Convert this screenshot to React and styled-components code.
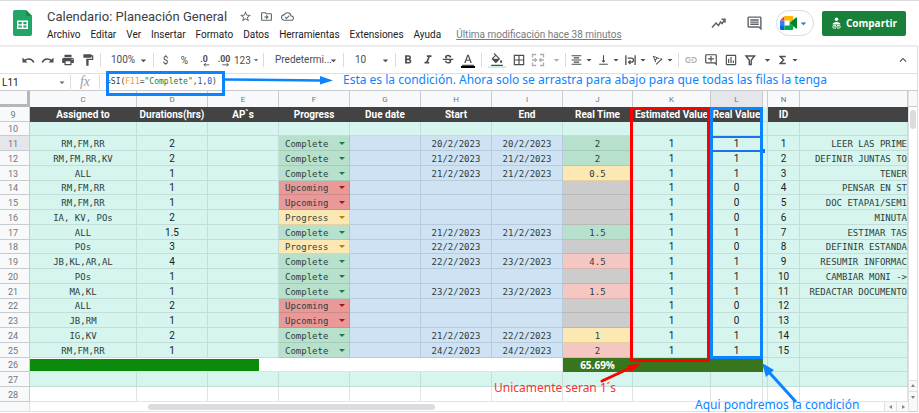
import React from 'react';
import styled, { createGlobalStyle, css } from 'styled-components';
import {
  MdPrint, MdFormatPaint, MdFormatBold, MdFormatItalic, MdStrikethroughS,
  MdFormatColorText, MdFormatColorFill, MdBorderAll, MdFormatAlignCenter, MdVerticalAlignBottom,
  MdLink, MdOutlineAddComment, MdOutlineInsertChart, MdFunctions,
  MdKeyboardArrowUp, MdArrowDropDown, MdStarBorder, MdOutlineDriveFileMove, MdOutlineCloudDone,
  MdOutlineInsertComment, MdTextRotationAngleup,
} from 'react-icons/md';

const BLUE = '#0a84ff';
const RED = '#ff0000';
const MINT = '#d5f5ee';

const GlobalStyle = createGlobalStyle`
  * { box-sizing: border-box; }
  body { margin: 0; background: #fff; color: #3c4043; font-family: Roboto, "Liberation Sans", sans-serif; font-size: 10px; }
  button, select, input { font: inherit; color: inherit; background: none; border: 0; border-radius: 0; padding: 0; margin: 0; outline: 0; }
`;

const Page = styled.div`
  border-top: 1px solid #dadada;
  padding-right: 1px;
`;

/* ---------- Document header ---------- */

const DocHeader = styled.header`
  display: flex;
  align-items: flex-start;
  height: 44px;
  padding: 9px 12px 0 13px;
`;
const DocInfo = styled.div`
  flex: 1;
  margin-left: 15px;
  margin-top: -2px;
`;
const TitleRow = styled.div`
  display: flex;
  align-items: center;
  height: 17px;
`;
const DocTitle = styled.h1`
  margin: 0 8px 0 0;
  font: 400 13px/17px Roboto, sans-serif;
  color: #3c4043;
`;
const TitleButton = styled.button`
  display: flex;
  width: 21px;
  justify-content: center;
  color: #5f6368;
  svg { width: 13px; height: 13px; }
`;
const MenuBar = styled.nav`
  display: flex;
  gap: 10px;
  height: 20px;
  align-items: center;
  color: #202124;
`;
const MenuButton = styled.button`
  line-height: 14px;
`;
const HistoryLink = styled.a`
  margin-left: 5px;
  color: #777b80;
  line-height: 14px;
`;
const Actions = styled.div`
  display: flex;
  align-items: center;
  height: 26px;
`;
const HeaderButton = styled.button`
  display: flex;
  width: 36px;
  justify-content: center;
  color: #5f6368;
`;
const MeetButton = styled.button`
  display: flex;
  align-items: center;
  justify-content: center;
  width: 38px;
  height: 26px;
  margin: 0 8px 0 4px;
  border: 1px solid #dadce0;
  border-radius: 13px;
  color: #1a73e8;
  svg { flex: none; }
`;
const ShareButton = styled.button`
  display: flex;
  align-items: center;
  justify-content: center;
  gap: 4px;
  width: 84px;
  height: 25px;
  border-radius: 2px;
  background: #188038;
  color: #fff;
  font: 700 10px/14px "Open Sans", sans-serif;
`;

/* ---------- Toolbar ---------- */

const Toolbar = styled.div`
  display: flex;
  align-items: center;
  height: 28px;
  padding: 0 4px 0 18px;
  border-top: 2px solid #ececec;
  border-right: 1px solid #dadce0;
  color: #4a4d51;
`;
const Divider = styled.span`
  width: 1px;
  height: 14px;
  margin: 0 ${p => (p.$wide ? 3 : 2)}px;
  background: #dadce0;
`;
const Tool = styled.button`
  position: relative;
  display: flex;
  align-items: center;
  justify-content: center;
  width: ${p => p.$w || 20}px;
  height: 20px;
  opacity: ${p => (p.$faded ? 0.45 : 1)};
  svg { width: 14px; height: 14px; }
`;
const SplitTool = styled(Tool)`
  justify-content: space-between;
  padding: 0 0 0 2px;
  svg:last-child { width: 13px; }
`;
const Swatch = styled.span`
  position: absolute;
  left: 3px;
  right: 3px;
  bottom: 2px;
  height: 2px;
  background: ${p => p.$color};
`;
const PickerLabel = styled.label`
  position: relative;
  display: flex;
  align-items: center;
  width: ${p => p.$w}px;
  svg { position: absolute; right: 1px; pointer-events: none; }
`;
const Picker = styled.select`
  appearance: none;
  width: 100%;
  height: 20px;
  padding-left: ${p => p.$pad || 8}px;
  line-height: 14px;
`;
const Spacer = styled.span`
  flex: 1;
`;

/* ---------- Formula bar ---------- */

const FormulaBar = styled.div`
  position: relative;
  display: flex;
  align-items: center;
  height: 17px;
  border-top: 1px solid #e0e0e0;
  border-right: 1px solid #dadce0;
`;
const NameBox = styled.input`
  width: 56px;
  padding-left: 2px;
  color: #202124;
`;
const NameMenu = styled.button`
  display: flex;
  width: 12px;
  color: #5f6368;
`;
const FxMark = styled.span`
  width: 24px;
  text-align: center;
  color: #9aa0a6;
  font: italic 14px/14px "Liberation Serif", serif;
`;
const Formula = styled.div`
  flex: 1;
  padding-left: 4px;
  color: #3c4043;
  font: 8px/14px "DejaVu Sans Mono", monospace;
  em { color: #f7981d; font-style: normal; }
  b { color: #188018; font-weight: 400; }
  i { color: #1155cc; font-style: normal; }
`;
const FormulaFrame = styled.div`
  position: absolute;
  z-index: 2;
  left: 106px;
  top: -3px;
  width: 119px;
  height: 25px;
  border: 3px solid ${BLUE};
`;
const FormulaNote = styled.div`
  position: absolute;
  left: 225px;
  top: -2px;
  display: flex;
  align-items: center;
  gap: 8px;
`;
const Note = styled.p`
  margin: 0;
  color: ${p => p.$color};
  font: 12px/16px "Noto Sans", sans-serif;
  white-space: nowrap;
`;

/* ---------- Sheet ---------- */

const SheetArea = styled.main`
  position: relative;
  display: flex;
  border-top: 1px solid #c9cbce;
`;
const GridPane = styled.div`
  flex: 1;
  min-width: 0;
`;
const Grid = styled.table`
  width: 100%;
  table-layout: fixed;
  border-collapse: separate;
  border-spacing: 0;
  th, td {
    height: 15px;
    padding: 1px 0 0;
    overflow: hidden;
    text-align: center;
    white-space: nowrap;
    line-height: 12px;
    border-right: 1px solid #c3ddd8;
    border-bottom: 1px solid #c3ddd8;
  }
  tbody tr:nth-child(4n + 2) > * { height: 14px; }
`;
const Corner = styled.td`
  && {
    height: 16px;
    background: #f8f9fa;
    border-right: 3px solid #b7b7b7;
    border-bottom: 3px solid #b7b7b7;
  }
`;
const Letter = styled.th`
  && {
    height: 16px;
    background: ${p => (p.$active ? '#e4e6e9' : '#f8f9fa')};
    color: #70757a;
    font-size: 8px;
    font-weight: 400;
    border-color: #c9cbce;
    border-bottom: 0;
  }
`;
const RowNumber = styled.th`
  && {
    background: ${p => (p.$active ? '#e4e6e9' : '#f8f9fa')};
    color: #70757a;
    font-size: 9px;
    font-weight: 400;
    padding-right: 3px;
    border-color: #c9cbce;
  }
`;
const FieldName = styled.th`
  && {
    background: #434343;
    color: #fff;
    font: 700 10px/12px Roboto, sans-serif;
    border-color: #434343;
  }
`;
const tones = {
  mint: css`background: ${MINT};`,
  blue: css`background: #cfe2f3; && { border-color: #b8cbdd; }`,
  green: css`background: #b7e1cd; && { border-color: #a4cdb9; }`,
  red: css`background: #ea9999; && { border-color: #d28989; }`,
  yellow: css`background: #fce8b2; && { border-color: #e6d19c; }`,
  pink: css`background: #f4c7c3; && { border-color: #dcb3af; }`,
  gray: css`background: #cccccc; && { border-color: #b8b8b8; }`,
  white: css`background: #fff; && { border-color: #e2e3e3; }`,
  forest: css`background: #38761d; color: #fff; && { border-color: #38761d; }`,
};
const Cell = styled.td`
  ${p => tones[p.$tone || 'mint']}
  color: #202124;
  font-size: 10px;
`;
const MonoCell = styled(Cell)`
  color: #2d3e3c;
  font-family: "DejaVu Sans Mono", monospace;
  font-size: 9px;
`;
const TaskCell = styled(MonoCell)`
  && { text-align: right; }
`;
const TotalCell = styled(Cell)`
  color: #fff;
  font: 700 10px/12px "Open Sans", sans-serif;
`;
const LastRow = styled.tr`
  && > * { height: ${p => p.$h}px; }
`;
const ProgressTrack = styled.div`
  height: 12px;
`;
const ProgressFill = styled.div`
  width: 43%;
  height: 100%;
  background: #0b8a0b;
`;
const StatusLabel = styled.label`
  position: relative;
  display: block;
  height: 12px;
  &::after {
    content: '';
    position: absolute;
    right: 4px;
    top: 4px;
    border: 3px solid transparent;
    border-top-color: ${p => p.$arrow};
    border-bottom: 0;
  }
`;
const StatusSelect = styled.select`
  appearance: none;
  display: block;
  width: 100%;
  height: 12px;
  padding-left: 6px;
  line-height: 12px;
`;

/* ---------- Scroll bars ---------- */

const VerticalBar = styled.div`
  display: flex;
  flex-direction: column;
  align-items: center;
  width: 10px;
  border-left: 1px solid #e0e0e0;
  border-right: 1px solid #dadce0;
`;
const BarHead = styled.div`
  width: 100%;
  height: ${p => (p.$h || 16)}px;
  background: #f8f9fa;
  border: solid #c9cbce;
  border-width: 0 0 1px;
`;
const VerticalThumb = styled.div`
  width: 6px;
  height: 19px;
  margin-top: 3px;
  border-radius: 3px;
  background: #dadce0;
`;
const Arrow = styled.button`
  display: flex;
  align-items: center;
  justify-content: center;
  width: ${p => (p.$side ? 12 : 8)}px;
  height: ${p => (p.$side ? 9 : 11)}px;
  background: #f8f9fa;
  border: solid #e0e0e0;
  border-width: ${p => (p.$side ? '0 0 0 1px' : '1px 0 0')};
`;
const HorizontalBar = styled.div`
  display: flex;
  align-items: center;
  height: 10px;
  border-bottom: 1px solid #e0e0e0;
`;
const BarCorner = styled.div`
  width: 30px;
  height: 9px;
  background: #f8f9fa;
  border-right: 1px solid #e0e0e0;
`;
const HorizontalTrack = styled.div`
  flex: 1;
  padding-left: 13%;
`;
const HorizontalThumb = styled.div`
  width: 39%;
  height: 6px;
  border-radius: 3px;
  background: #dadce0;
`;

/* ---------- Annotations over the sheet ---------- */

const ColumnFrame = styled.div`
  position: absolute;
  left: ${p => p.$x}px;
  top: 16px;
  width: ${p => p.$w}px;
  height: ${p => p.$h}px;
  border: 3px solid ${p => p.$color};
`;
const ActiveCell = styled.div`
  position: absolute;
  left: 711px;
  top: 45px;
  width: 52px;
  height: 16px;
  border: solid #1a73e8;
  border-width: 2px 1px;
  &::after {
    content: '';
    position: absolute;
    right: -3px;
    bottom: -3px;
    width: 4px;
    height: 4px;
    background: #1a73e8;
  }
`;
const ArrowLayer = styled.svg`
  position: absolute;
  left: 598px;
  top: 268px;
`;
const SheetNote = styled(Note)`
  position: absolute;
  left: ${p => p.$x}px;
  top: ${p => p.$y}px;
`;

/* ---------- Icons ---------- */

const SheetsLogo = () => (
  <svg width="19" height="26" viewBox="0 0 19 26" aria-label="Sheets">
    <path d="M2 0h11l6 6v18a2 2 0 0 1-2 2H2a2 2 0 0 1-2-2V2a2 2 0 0 1 2-2z" fill="#23a566" />
    <path d="M13 0l6 6h-4.500a1.500 1.500 0 0 1-1.500-1.500z" fill="#188a4b" />
    <path d="M4 10.500h11v8.500H4zM5.500 12v2.200h3.300V12zm4.800 0v2.200h3.200V12zm-4.800 3.500v2.100h3.300v-2.100zm4.800 0v2.100h3.200v-2.100z" fill="#fff" fillRule="evenodd" />
  </svg>
);
const TrendIcon = () => (
  <svg width="15" height="11" viewBox="0 0 15 11" fill="none" stroke="currentColor" strokeWidth="1.500">
    <path d="M1 9.500L5 5l2.500 2.500L9.500 4 11 5.500l3-4M10.500 1.200H14v3.500" />
  </svg>
);
const MeetLogo = () => (
  <svg width="17" height="14" viewBox="0 0 17 14">
    <path d="M0 4.500h4.500V10H0z" fill="#2684fc" />
    <path d="M0 4.500L4.500 0v4.500z" fill="#ea4335" />
    <path d="M4.500 0H12a1.200 1.200 0 0 1 1.200 1.200V5L9.500 7V4.500h-5z" fill="#ffba00" />
    <path d="M0 10h4.500v4H1.200A1.200 1.200 0 0 1 0 12.800z" fill="#0066da" />
    <path d="M4.500 9.500h5V7l3.700 3v2.800A1.200 1.200 0 0 1 12 14H4.500z" fill="#00ac47" />
    <path d="M9.500 7L16 1.500c.4-.3 1 0 1 .5v10c0 .5-.6.800-1 .5z" fill="#00832d" />
  </svg>
);
const ShareIcon = () => (
  <svg width="11" height="12" viewBox="0 0 11 12" fill="none" stroke="#fff">
    <circle cx="5.500" cy="2.300" r="1.800" fill="#fff" stroke="none" />
    <path d="M1.500 7.500c0-3.500 8-3.500 8 0z" fill="#fff" stroke="none" />
    <path d="M5 8.500H3a1.300 1.300 0 0 0 0 2.600h2M6 8.500h2a1.300 1.300 0 0 1 0 2.600H6M3.500 9.800h4" strokeWidth=".9" />
  </svg>
);
const UndoIcon = ({ flip }) => (
  <svg viewBox="0 0 14 14" fill="none" stroke="currentColor" strokeWidth="1.600">
    <g transform={flip ? 'translate(14 0) scale(-1 1)' : undefined}>
      <path d="M2.500 8.500C5.500 5 10.500 5 12.800 9.500" />
      <path d="M1.500 4.500v5h5z" fill="currentColor" stroke="none" />
    </g>
  </svg>
);
const MergeIcon = () => (
  <svg viewBox="0 0 14 14" fill="none" stroke="currentColor" strokeWidth="1.300">
    <path d="M1.500 4.500v-3h3.500M9 1.500h3.500v3M1.500 9.500v3h3.500M9 12.500h3.500v-3M1 7h4M13 7H9M3.700 5.300L5.500 7 3.700 8.700M10.300 5.300L8.500 7l1.800 1.700" />
  </svg>
);
const WrapIcon = () => (
  <svg viewBox="0 0 14 14" fill="none" stroke="currentColor" strokeWidth="1.400">
    <path d="M2 2v10.500M12 2v10.500M4 5h4a2.200 2.200 0 0 1 0 4.400H5.500M7 7.500L5 9.400l2 1.900" />
  </svg>
);
const FilterIcon = () => (
  <svg viewBox="0 0 14 14" fill="none" stroke="currentColor" strokeWidth="1.400">
    <path d="M3 3h8.500L8.200 7.200V11.500H6.300V7.200z" />
  </svg>
);
const DecimalIcon = ({ digits, right }) => (
  <svg viewBox="0 0 16 16">
    <text x="8" y="10" textAnchor="middle" fontSize="10" fontWeight="700" fill="currentColor">{digits}</text>
    <path d={right ? 'M6 13.500h7M11 11.500l2 2-2 2' : 'M14 13.500H8M10 11.500l-2 2 2 2'} fill="none" stroke="currentColor" />
  </svg>
);
const Caret = () => <MdArrowDropDown size={13} />;

/* ---------- Data ---------- */

const columns = [
  ['C', 107, 'Assigned to'], ['D', 71, 'Durations(hrs)'], ['E', 71, 'AP`s'], ['F', 71, 'Progress'],
  ['G', 71, 'Due date'], ['H', 71, 'Start'], ['I', 71, 'End'], ['J', 70, 'Real Time'],
  ['K', 78, 'Estimated Value'], ['L', 52, 'Real Value'], ['', 5, ''], ['N', 32, 'ID'], ['', 0, ''],
];

const statusTone = { Complete: 'green', Upcoming: 'red', Progress: 'yellow' };
const statusArrow = { Complete: '#1e7a4c', Upcoming: '#a31515', Progress: '#b87f00' };

const tasks = [
  ['RM,FM,RR', '2', 'Complete', '20/2/2023', '20/2/2023', '2', 'green', '1', 'LEER LAS PRIME'],
  ['RM,FM,RR,KV', '2', 'Complete', '21/2/2023', '21/2/2023', '2', 'green', '1', 'DEFINIR JUNTAS TO'],
  ['ALL', '1', 'Complete', '21/2/2023', '21/2/2023', '0.5', 'yellow', '1', 'TENER'],
  ['RM,FM,RR', '1', 'Upcoming', '', '', '', 'gray', '0', 'PENSAR EN ST'],
  ['RM,FM,RR', '1', 'Upcoming', '', '', '', 'gray', '0', 'DOC ETAPA1/SEM1'],
  ['IA, KV, POs', '2', 'Progress', '', '', '', 'gray', '0', 'MINUTA'],
  ['ALL', '1.5', 'Complete', '21/2/2023', '21/2/2023', '1.5', 'green', '1', 'ESTIMAR TAS'],
  ['POs', '3', 'Progress', '22/2/2023', '', '', 'gray', '0', 'DEFINIR ESTANDA'],
  ['JB,KL,AR,AL', '4', 'Complete', '22/2/2023', '23/2/2023', '4.5', 'pink', '1', 'RESUMIR INFORMAC'],
  ['POs', '1', 'Complete', '', '', '', 'gray', '1', 'CAMBIAR MONI ->'],
  ['MA,KL', '1', 'Complete', '23/2/2023', '23/2/2023', '1.5', 'pink', '1', 'REDACTAR DOCUMENTO'],
  ['ALL', '2', 'Upcoming', '', '', '', 'gray', '0', ''],
  ['JB,RM', '1', 'Upcoming', '', '', '', 'gray', '0', ''],
  ['IG,KV', '2', 'Complete', '21/2/2023', '22/2/2023', '1', 'yellow', '1', ''],
  ['RM,FM,RR', '1', 'Complete', '24/2/2023', '24/2/2023', '2', 'pink', '1', ''],
];

const menus = ['Archivo', 'Editar', 'Ver', 'Insertar', 'Formato', 'Datos', 'Herramientas', 'Extensiones', 'Ayuda'];

function Header() {
  return (
    <DocHeader>
      <SheetsLogo />
      <DocInfo>
        <TitleRow>
          <DocTitle>Calendario: Planeación General</DocTitle>
          <TitleButton aria-label="Destacar"><MdStarBorder /></TitleButton>
          <TitleButton aria-label="Mover"><MdOutlineDriveFileMove /></TitleButton>
          <TitleButton aria-label="Guardado"><MdOutlineCloudDone /></TitleButton>
        </TitleRow>
        <MenuBar>
          {menus.map(m => <MenuButton key={m}>{m}</MenuButton>)}
          <HistoryLink href="#historial">Última modificación hace 38 minutos</HistoryLink>
        </MenuBar>
      </DocInfo>
      <Actions>
        <HeaderButton aria-label="Actividad"><TrendIcon /></HeaderButton>
        <HeaderButton aria-label="Comentarios"><MdOutlineInsertComment size={17} /></HeaderButton>
        <MeetButton aria-label="Meet"><MeetLogo /><Caret /></MeetButton>
        <ShareButton><ShareIcon />Compartir</ShareButton>
      </Actions>
    </DocHeader>
  );
}

function Tools() {
  return (
    <Toolbar>
      <Tool aria-label="Deshacer"><UndoIcon /></Tool>
      <Tool aria-label="Rehacer"><UndoIcon flip /></Tool>
      <Tool aria-label="Imprimir"><MdPrint /></Tool>
      <Tool aria-label="Copiar formato"><MdFormatPaint /></Tool>
      <Divider />
      <PickerLabel $w={48}><Picker aria-label="Zoom"><option>100%</option></Picker><Caret /></PickerLabel>
      <Divider />
      <Tool $w={19}>$</Tool>
      <Tool $w={19}>%</Tool>
      <Tool $w={19} aria-label="Menos decimales"><DecimalIcon digits=".0" /></Tool>
      <Tool $w={21} aria-label="Más decimales"><DecimalIcon digits=".00" right /></Tool>
      <Tool $w={27}>123<MdArrowDropDown /></Tool>
      <Divider />
      <PickerLabel $w={75}><Picker $pad={9} aria-label="Fuente"><option>Predetermi...</option></Picker><Caret /></PickerLabel>
      <Divider />
      <PickerLabel $w={47}><Picker $pad={9} aria-label="Tamaño"><option>10</option></Picker><Caret /></PickerLabel>
      <Divider />
      <Tool aria-label="Negrita"><MdFormatBold /></Tool>
      <Tool aria-label="Cursiva"><MdFormatItalic /></Tool>
      <Tool aria-label="Tachado"><MdStrikethroughS /></Tool>
      <Tool aria-label="Color de texto"><MdFormatColorText /><Swatch $color="#000" /></Tool>
      <Divider $wide />
      <Tool $w={24} aria-label="Relleno"><MdFormatColorFill /><Swatch $color="#cdf0ea" /></Tool>
      <Tool aria-label="Bordes"><MdBorderAll /></Tool>
      <SplitTool $w={34} $faded aria-label="Combinar"><MergeIcon /><Caret /></SplitTool>
      <Divider />
      <SplitTool $w={27} aria-label="Alinear"><MdFormatAlignCenter /><Caret /></SplitTool>
      <SplitTool $w={27} aria-label="Alinear vertical"><MdVerticalAlignBottom /><Caret /></SplitTool>
      <SplitTool $w={27} aria-label="Ajuste de texto"><WrapIcon /><Caret /></SplitTool>
      <SplitTool $w={27} aria-label="Rotar texto"><MdTextRotationAngleup /><Caret /></SplitTool>
      <Divider />
      <Tool $faded aria-label="Enlace"><MdLink /></Tool>
      <Tool aria-label="Comentario"><MdOutlineAddComment /></Tool>
      <Tool aria-label="Gráfico"><MdOutlineInsertChart /></Tool>
      <SplitTool $w={33} aria-label="Filtro"><FilterIcon /><Caret /></SplitTool>
      <SplitTool $w={27} aria-label="Funciones"><MdFunctions /><Caret /></SplitTool>
      <Spacer />
      <Tool aria-label="Ocultar menús"><MdKeyboardArrowUp /></Tool>
    </Toolbar>
  );
}

function FormulaRow() {
  return (
    <FormulaBar>
      <NameBox aria-label="Celda" defaultValue="L11" />
      <NameMenu aria-label="Rangos"><Caret /></NameMenu>
      <Divider />
      <FxMark>fx</FxMark>
      <Divider />
      <Formula role="textbox" aria-label="Fórmula">=SI(<em>F11</em>=<b>"Complete"</b>,<i>1</i>,<i>0</i>)</Formula>
      <FormulaFrame />
      <FormulaNote>
        <svg width="110" height="10" viewBox="0 0 110 10">
          <path d="M0 4.500L96 5.500" stroke={BLUE} strokeWidth="2.500" />
          <path d="M95 1l13 4.500-13 4z" fill={BLUE} />
        </svg>
        <Note $color={BLUE}>Esta es la condición. Ahora solo se arrastra para abajo para que todas las filas la tenga</Note>
      </FormulaNote>
    </FormulaBar>
  );
}

function TaskRow({ n, task }) {
  const [who, hours, status, start, end, real, realTone, value, text] = task;
  return (
    <tr>
      <RowNumber scope="row" $active={n === 1}>{n + 10}</RowNumber>
      <MonoCell>{who}</MonoCell>
      <Cell>{hours}</Cell>
      <Cell />
      <MonoCell $tone={statusTone[status]}>
        <StatusLabel $arrow={statusArrow[status]}>
          <StatusSelect aria-label={`Progress ${n}`} defaultValue={status}>
            <option>Complete</option>
            <option>Upcoming</option>
            <option>Progress</option>
          </StatusSelect>
        </StatusLabel>
      </MonoCell>
      <MonoCell $tone="blue" />
      <MonoCell $tone="blue">{start}</MonoCell>
      <MonoCell $tone="blue">{end}</MonoCell>
      <MonoCell $tone={realTone}>{real}</MonoCell>
      <Cell>1</Cell>
      <Cell>{value}</Cell>
      <Cell />
      <Cell>{n}</Cell>
      <TaskCell>{text}</TaskCell>
    </tr>
  );
}

function Sheet() {
  return (
    <SheetArea>
      <GridPane>
        <Grid>
          <colgroup>
            <col width="30" />
            {columns.map(([, w], i) => <col key={i} width={w || undefined} />)}
          </colgroup>
          <thead>
            <tr>
              <Corner />
              {columns.map(([l], i) => <Letter key={i} scope="col" $active={l === 'L'}>{l}</Letter>)}
            </tr>
          </thead>
          <tbody>
            <tr>
              <RowNumber scope="row">9</RowNumber>
              {columns.map(([, w, name], i) => (w === 5 ? <Cell key={i} /> : <FieldName key={i}>{name}</FieldName>))}
            </tr>
            <tr>
              <RowNumber scope="row">10</RowNumber>
              {columns.map((_, i) => <Cell key={i} />)}
            </tr>
            {tasks.map((t, i) => <TaskRow key={i} n={i + 1} task={t} />)}
            <LastRow $h={16}>
              <RowNumber scope="row">26</RowNumber>
              <Cell $tone="white" colSpan={7}><ProgressTrack><ProgressFill /></ProgressTrack></Cell>
              <TotalCell $tone="forest">65.69%</TotalCell>
              <Cell $tone="forest" />
              <Cell $tone="forest" />
              <Cell /><Cell /><Cell />
            </LastRow>
            <LastRow $h={15}>
              <RowNumber scope="row">27</RowNumber>
              {columns.map((_, i) => <Cell key={i} />)}
            </LastRow>
            <LastRow $h={15}>
              <RowNumber scope="row">28</RowNumber>
              {columns.map((_, i) => <Cell key={i} $tone="white" />)}
            </LastRow>
          </tbody>
        </Grid>
        <HorizontalBar>
          <BarCorner />
          <HorizontalTrack><HorizontalThumb /></HorizontalTrack>
          <Arrow $side aria-label="Izquierda"><svg width="4" height="4"><path d="M3 0v4L0 2z" fill="#80868b" /></svg></Arrow>
          <Arrow $side aria-label="Derecha"><svg width="4" height="4"><path d="M1 0v4l3-2z" fill="#80868b" /></svg></Arrow>
        </HorizontalBar>
      </GridPane>
      <VerticalBar>
        <BarHead />
        <VerticalThumb />
        <Spacer />
        <Arrow aria-label="Arriba"><svg width="4" height="4"><path d="M0 3h4L2 0z" fill="#80868b" /></svg></Arrow>
        <Arrow aria-label="Abajo"><svg width="4" height="4"><path d="M0 1h4L2 4z" fill="#80868b" /></svg></Arrow>
        <BarHead $h={10} />
      </VerticalBar>
      <ActiveCell />
      <ColumnFrame $x={630} $w={80} $h={255} $color={RED} />
      <ColumnFrame $x={710} $w={53} $h={252} $color={BLUE} />
      <ArrowLayer width="200" height="54" viewBox="0 0 200 54">
        <path d="M4 22L32 9" stroke={RED} strokeWidth="3" strokeLinecap="round" />
        <path d="M43 5L29 6l4 7z" fill={RED} />
        <path d="M198 43L170 12" stroke={BLUE} strokeWidth="3" />
        <path d="M164 4l4 14 8-7z" fill={BLUE} />
      </ArrowLayer>
      <SheetNote $x={494} $y={289} $color="#ff3030">Unicamente seran 1´s</SheetNote>
      <SheetNote $x={695} $y={306} $color={BLUE}>Aqui pondremos la condición</SheetNote>
    </SheetArea>
  );
}

export default function App() {
  return (
    <>
      <GlobalStyle />
      <Page>
        <Header />
        <Tools />
        <FormulaRow />
        <Sheet />
      </Page>
    </>
  );
}
